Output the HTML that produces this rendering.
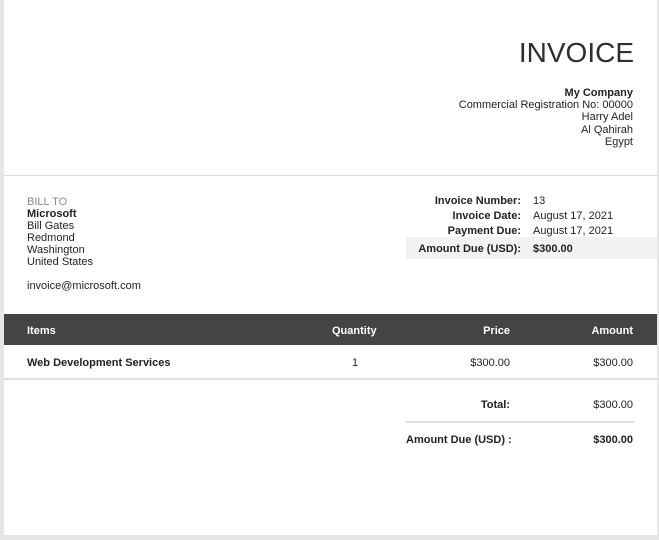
<!DOCTYPE html>
<html><head><style>
body{margin:0;width:659px;height:540px;background:#e6e6e6;font-family:"Liberation Sans",sans-serif;font-size:11px;color:#222;position:relative;overflow:hidden}
.sheet{position:absolute;left:4px;top:0;width:653px;height:535px;background:#fff}
.a{position:absolute;white-space:nowrap;line-height:12px}
.r{text-align:right}
b{font-weight:bold}
</style></head><body>
<div class="sheet"></div>
<div class="a r" style="right:25px;top:37px;font-size:28px;line-height:32px;color:#2a2f33">INVOICE</div>
<div class="a r" style="right:26px;top:87px;line-height:12.2px"><b>My Company</b><br>Commercial Registration No: 00000<br>Harry Adel<br>Al Qahirah<br>Egypt</div>
<div style="position:absolute;left:4px;top:175px;width:653px;height:1px;background:#ddd"></div>
<div class="a" style="left:27px;top:196px;"><span style="color:#888">BILL TO</span><br><b>Microsoft</b><br>Bill Gates<br>Redmond<br>Washington<br>United States<br><br>invoice@microsoft.com</div>
<div style="position:absolute;left:406px;top:237px;width:251px;height:22px;background:#f1f2f2"></div>
<div class="a r" style="right:138px;top:194px;line-height:15px"><b>Invoice Number:</b><br><b>Invoice Date:</b><br><b>Payment Due:</b></div>
<div class="a" style="left:533px;top:194px;line-height:15px">13<br>August 17, 2021<br>August 17, 2021</div>
<div class="a r" style="right:138px;top:243px"><b>Amount Due (USD):</b></div>
<div class="a" style="left:533px;top:243px"><b>$300.00</b></div>
<div style="position:absolute;left:4px;top:314px;width:653px;height:31px;background:#444"></div>
<div class="a" style="left:27px;top:325px;color:#fff"><b>Items</b></div>
<div class="a" style="left:332px;top:325px;color:#fff"><b>Quantity</b></div>
<div class="a r" style="right:149px;top:325px;color:#fff"><b>Price</b></div>
<div class="a r" style="right:26px;top:325px;color:#fff"><b>Amount</b></div>
<div class="a" style="left:27px;top:357px"><b>Web Development Services</b></div>
<div class="a" style="left:352px;top:357px">1</div>
<div class="a r" style="right:149px;top:357px">$300.00</div>
<div class="a r" style="right:26px;top:357px">$300.00</div>
<div style="position:absolute;left:4px;top:378px;width:653px;height:2px;background:#ddd"></div>
<div class="a r" style="right:149px;top:399px"><b>Total:</b></div>
<div class="a r" style="right:26px;top:399px">$300.00</div>
<div style="position:absolute;left:406px;top:421px;width:228px;height:2px;background:#ddd"></div>
<div class="a" style="left:406px;top:434px"><b>Amount Due (USD) :</b></div>
<div class="a r" style="right:26px;top:434px"><b>$300.00</b></div>
</body></html>
